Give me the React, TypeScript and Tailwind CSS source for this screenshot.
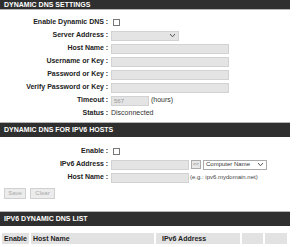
const Chevron = () => (
  <svg width="7" height="5" viewBox="0 0 7 5" className="shrink-0">
    <path d="M1 1 L3.5 3.8 L6 1" fill="none" stroke="#555" strokeWidth="1" />
  </svg>
);

const Header = ({ title, first }: { title: string; first?: boolean }) => (
  <div className={first ? 'w-[290px] border-b border-[#b5b5b5]' : 'w-[290px] border-t border-[#b5b5b5]'}>
    <div
      className={
        first
          ? 'h-[9px] bg-[#2f2f2f] pl-[4px] text-[7px] font-bold leading-[9px] text-white'
          : 'h-[14px] bg-[#2f2f2f] pl-[4px] text-[7px] font-bold leading-[14px] text-white'
      }
    >
      {title}
    </div>
  </div>
);

const Row = ({ label, children }: { label: string; children?: React.ReactNode }) => (
  <div className="flex h-[13px] items-center">
    <div className="w-[104px] text-right text-[7px] font-bold text-[#222]">{label}</div>
    <div className="w-[6px] text-center text-[7px] font-bold text-[#222]">:</div>
    <div className="flex items-center gap-[2px] pl-[1px]">{children}</div>
  </div>
);

const Field = ({ w, value }: { w: string; value?: string }) => (
  <div className={`${w} h-[10px] border border-[#d2d2d2] bg-[#e4e4e4] pl-[2px] text-[6px] leading-[8px] text-[#999]`}>
    {value}
  </div>
);

const Box = () => <div className="ml-[2px] h-[7px] w-[7px] border border-[#777] bg-white" />;

export default function App() {
  return (
    <div className="h-[247px] w-[300px] overflow-hidden bg-white font-['Liberation_Sans',Arial,sans-serif]">
      <Header title="DYNAMIC DNS SETTINGS" first />

      <div className="mt-[6px]">
        <Row label="Enable Dynamic DNS">
          <Box />
        </Row>
        <Row label="Server Address">
          <div className="flex h-[10px] w-[68px] items-center justify-end border border-[#d2d2d2] bg-[#e4e4e4] pr-[2px]">
            <Chevron />
          </div>
        </Row>
        <Row label="Host Name">
          <Field w="w-[118px]" />
        </Row>
        <Row label="Username or Key">
          <Field w="w-[118px]" />
        </Row>
        <Row label="Password or Key">
          <Field w="w-[118px]" />
        </Row>
        <Row label="Verify Password or Key">
          <Field w="w-[118px]" />
        </Row>
        <Row label="Timeout">
          <Field w="w-[38px]" value="567" />
          <span className="text-[7px] text-[#333]">(hours)</span>
        </Row>
        <Row label="Status">
          <span className="text-[7px] text-[#333]">Disconnected</span>
        </Row>
      </div>

      <div className="mt-[2px]">
        <Header title="DYNAMIC DNS FOR IPV6 HOSTS" />
      </div>

      <div className="mt-[8px]">
        <Row label="Enable">
          <Box />
        </Row>
        <Row label="IPv6 Address">
          <Field w="w-[78px]" />
          <div className="h-[9px] w-[10px] border border-[#aaa] bg-[#e8e8e8] text-center text-[5px] leading-[7px] text-[#777]">
            &lt;&lt;
          </div>
          <div className="flex h-[10px] w-[64px] items-center justify-between border border-[#aaa] bg-white pl-[2px] pr-[2px] text-[6px] text-[#333]">
            <span>Computer Name</span>
            <Chevron />
          </div>
        </Row>
        <Row label="Host Name">
          <Field w="w-[78px]" />
          <span className="-ml-[1px] text-[6px] text-[#444]">(e.g.: ipv6.mydomain.net)</span>
        </Row>
      </div>

      <div className="mt-[4px] flex gap-[4px] pl-[4px]">
        <div className="h-[11px] w-[22px] border border-[#d0d0d0] bg-[#ececec] text-center text-[6px] leading-[9px] text-[#aaa]">
          Save
        </div>
        <div className="h-[11px] w-[25px] border border-[#d0d0d0] bg-[#ececec] text-center text-[6px] leading-[9px] text-[#aaa]">
          Clear
        </div>
      </div>

      <div className="mt-[12px]">
        <Header title="IPV6 DYNAMIC DNS LIST" />
      </div>

      <div className="mt-[7px] flex gap-[2px] pl-[2px] text-[7px] font-bold text-[#222]">
        <div className="h-[11px] w-[27px] bg-[#e2e2e2] pl-[2px] leading-[11px]">Enable</div>
        <div className="h-[11px] w-[123px] bg-[#e2e2e2] pl-[2px] leading-[11px]">Host Name</div>
        <div className="h-[11px] w-[84px] bg-[#e2e2e2] pl-[6px] leading-[11px]">IPv6 Address</div>
        <div className="h-[11px] w-[21px] bg-[#e2e2e2]" />
        <div className="h-[11px] w-[22px] bg-[#e2e2e2]" />
      </div>
    </div>
  );
}
